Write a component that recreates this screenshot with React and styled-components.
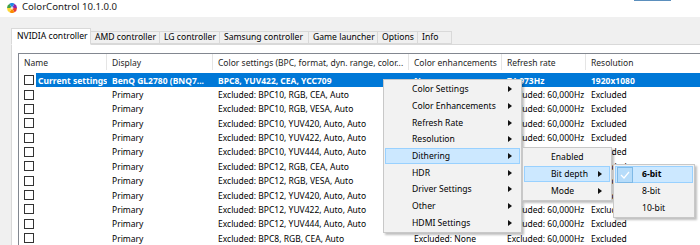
import React from 'react';
import styled, { createGlobalStyle } from 'styled-components';

const FONT = '"Noto Sans", "Open Sans", sans-serif';

const COLUMNS = [
  { title: 'Name', width: 88 },
  { title: 'Display', width: 106 },
  { title: 'Color settings (BPC, format, dyn. range, color...', width: 196 },
  { title: 'Color enhancements', width: 93 },
  { title: 'Refresh rate', width: 84 },
  { title: 'Resolution', width: 140 },
];

const GRID = COLUMNS.map(c => `${c.width}px`).join(' ');

const PRESETS = [
  'BPC10, RGB, CEA, Auto',
  'BPC10, RGB, VESA, Auto',
  'BPC10, YUV420, Auto, Auto',
  'BPC10, YUV422, Auto, Auto',
  'BPC10, YUV444, Auto, Auto',
  'BPC12, RGB, CEA, Auto',
  'BPC12, RGB, VESA, Auto',
  'BPC12, YUV420, Auto, Auto',
  'BPC12, YUV422, Auto, Auto',
  'BPC12, YUV444, Auto, Auto',
  'BPC8, RGB, CEA, Auto',
];

const TABS = [
  { label: 'NVIDIA controller', width: 80 },
  { label: 'AMD controller', width: 69 },
  { label: 'LG controller', width: 60 },
  { label: 'Samsung controller', width: 89 },
  { label: 'Game launcher', width: 69 },
  { label: 'Options', width: 40 },
  { label: 'Info', width: 34 },
];

const MAIN_MENU = [
  'Color Settings',
  'Color Enhancements',
  'Refresh Rate',
  'Resolution',
  'Dithering',
  'HDR',
  'Driver Settings',
  'Other',
  'HDMI Settings',
];

const GlobalStyle = createGlobalStyle`
  html, body {
    margin: 0;
    padding: 0;
    background: #f0f0f0;
    overflow: hidden;
  }
  body {
    font-family: ${FONT};
    font-size: 8.5px;
    color: #000;
  }
`;

const Window = styled.div`
  position: relative;
  width: 700px;
  height: 245px;
  display: flex;
  flex-direction: column;
  background: #f0f0f0;
  overflow: hidden;
`;

const TitleBar = styled.div`
  height: 17px;
  flex: none;
  background: #fff;
  display: flex;
  align-items: flex-start;
  padding-left: 7px;
  box-sizing: border-box;
`;

const TitleText = styled.span`
  margin-left: 5px;
  margin-top: 1px;
  font-size: 9.6px;
  line-height: 12px;
  color: #1a1a1a;
`;

const CaptionEdge = styled.div`
  margin-left: auto;
  margin-right: 29px;
  width: 37px;
  height: 1px;
  background: #5b8fbd;
`;

const Client = styled.div`
  flex: 1;
  display: flex;
  flex-direction: column;
  padding: 11px 0 0 11px;
`;

const TabStrip = styled.div`
  display: flex;
  align-items: flex-end;
  height: 16px;
  position: relative;
  z-index: 1;
`;

const Tab = styled.div`
  width: ${p => p.width}px;
  height: ${p => (p.active ? 17 : 13)}px;
  margin-bottom: ${p => (p.active ? -1 : 0)}px;
  box-sizing: border-box;
  border: 1px solid #d9d9d9;
  border-left-width: ${p => (p.first ? 1 : 0)}px;
  border-bottom-color: ${p => (p.active ? '#fff' : '#d9d9d9')};
  background: ${p => (p.active ? '#fff' : '#f0f0f0')};
  padding-left: ${p => (p.active ? 5 : 4)}px;
  display: flex;
  align-items: center;
  white-space: nowrap;
  font-size: 8.6px;
  line-height: 11px;
`;

const TabPage = styled.div`
  flex: 1;
  background: #fff;
  border-top: 1px solid #d9d9d9;
  border-left: 1px solid #d9d9d9;
  padding: 8px 0 0 6px;
`;

const ListView = styled.div`
  border-top: 1px solid #828790;
  border-left: 1px solid #828790;
  background: #fff;
  height: 100%;
`;

const Header = styled.div`
  display: grid;
  grid-template-columns: ${GRID};
  height: 16px;
`;

const HeaderCell = styled.div`
  border-right: 1px solid #e5e5e5;
  padding-left: 5px;
  display: flex;
  align-items: center;
  white-space: nowrap;
  overflow: hidden;
  color: #1e1e1e;
`;

const Rows = styled.div`
  padding-top: 3px;
`;

const Row = styled.div`
  display: grid;
  grid-template-columns: ${GRID};
  height: 14.36px;
  align-items: center;
  font-weight: ${p => (p.selected ? 700 : 400)};
  color: ${p => (p.selected ? '#fff' : '#000')};
`;

const NameCell = styled.div`
  display: flex;
  align-items: center;
  height: 100%;
  padding-left: 5px;
`;

const CheckBox = styled.span`
  width: 10px;
  height: 10px;
  flex: none;
  box-sizing: border-box;
  border: 1px solid #333;
  background: #fff;
`;

const NameText = styled.span`
  flex: 1;
  height: 100%;
  margin-left: 2px;
  padding-left: 2px;
  display: flex;
  align-items: center;
  white-space: nowrap;
  overflow: hidden;
  background: ${p => (p.selected ? '#0078d7' : 'transparent')};
`;

const Cell = styled.div`
  height: 100%;
  padding-left: 5px;
  display: flex;
  align-items: center;
  white-space: nowrap;
  overflow: hidden;
  background: ${p => (p.selected ? '#0078d7' : 'transparent')};
`;

const Menu = styled.div`
  position: absolute;
  left: ${p => p.x}px;
  top: ${p => p.y}px;
  width: ${p => p.w}px;
  box-sizing: border-box;
  padding: 1px 1px;
  background: #f2f2f2;
  border: 1px solid #c8c8c8;
  box-shadow: 2px 2px 2px rgba(0, 0, 0, 0.25);
  z-index: 5;
`;

const Item = styled.div`
  height: 16.67px;
  box-sizing: border-box;
  display: flex;
  align-items: center;
  padding-left: ${p => p.indent}px;
  padding-right: 7px;
  border: 1px solid ${p => (p.active ? '#99d1ff' : 'transparent')};
  background: ${p => (p.active ? '#cce8ff' : 'transparent')};
  font-weight: ${p => (p.bold ? 700 : 400)};
  white-space: nowrap;
  font-size: 8.6px;
`;

const ItemLabel = styled.span`
  flex: 1;
`;

const CheckMark = styled.span`
  position: absolute;
  left: 2px;
  top: 1px;
  width: 16px;
  height: 16px;
  box-sizing: border-box;
  border: 1px solid #7fb9e6;
  background: #b6dcfa;
  display: flex;
  align-items: center;
  justify-content: center;
`;

const Arrow = () => (
  <svg width="4" height="6" viewBox="0 0 4 6">
    <polygon points="0,0 4,3 0,6" fill="#111" />
  </svg>
);

const AppIcon = () => (
  <svg width="10" height="10" viewBox="0 0 20 20" style={{ marginTop: 3 }}>
    {['#e53935', '#fb8c00', '#fdd835', '#43a047', '#1e88e5', '#8e24aa'].map((c, i) => {
      const a0 = (i * 60 * Math.PI) / 180;
      const a1 = ((i + 1) * 60 * Math.PI) / 180;
      const p = (a, r) => `${10 + r * Math.cos(a)},${10 + r * Math.sin(a)}`;
      return <path key={c} d={`M10,10 L${p(a0, 10)} A10,10 0 0 1 ${p(a1, 10)} Z`} fill={c} />;
    })}
    <circle cx="10" cy="10" r="3" fill="#fff" opacity="0.7" />
  </svg>
);

const MenuItem = ({ label, active, bold, indent = 26, arrow = true }) => (
  <Item active={active} bold={bold} indent={indent}>
    <ItemLabel>{label}</ItemLabel>
    {arrow && <Arrow />}
  </Item>
);

export default function App() {
  return (
    <Window>
      <GlobalStyle />
      <TitleBar>
        <AppIcon />
        <TitleText>ColorControl 10.1.0.0</TitleText>
        <CaptionEdge />
      </TitleBar>
      <Client>
        <TabStrip>
          {TABS.map((t, i) => (
            <Tab key={t.label} width={t.width} active={i === 0} first={i === 0}>
              {t.label}
            </Tab>
          ))}
        </TabStrip>
        <TabPage>
          <ListView>
            <Header>
              {COLUMNS.map(c => (
                <HeaderCell key={c.title}>{c.title}</HeaderCell>
              ))}
            </Header>
            <Rows>
              <Row selected>
                <NameCell>
                  <CheckBox />
                  <NameText selected>Current settings</NameText>
                </NameCell>
                <Cell selected>BenQ GL2780 (BNQ7...</Cell>
                <Cell selected>BPC8, YUV422, CEA, YCC709</Cell>
                <Cell selected>None</Cell>
                <Cell selected>74,973Hz</Cell>
                <Cell selected>1920x1080</Cell>
              </Row>
              {PRESETS.map(p => (
                <Row key={p}>
                  <NameCell>
                    <CheckBox />
                  </NameCell>
                  <Cell>Primary</Cell>
                  <Cell>Excluded: {p}</Cell>
                  <Cell>Excluded: None</Cell>
                  <Cell>Excluded: 60,000Hz</Cell>
                  <Cell>Excluded</Cell>
                </Row>
              ))}
            </Rows>
          </ListView>
        </TabPage>
      </Client>

      <Menu x={383} y={79} w={139}>
        {MAIN_MENU.map(label => (
          <MenuItem key={label} label={label} active={label === 'Dithering'} />
        ))}
      </Menu>

      <Menu x={522} y={147} w={90}>
        <MenuItem label="Enabled" arrow={false} />
        <MenuItem label="Bit depth" active />
        <MenuItem label="Mode" />
      </Menu>

      <Menu x={613} y={164} w={82}>
        <div style={{ position: 'relative' }}>
          <CheckMark>
            <svg width="10" height="8" viewBox="0 0 10 8">
              <polyline points="1,4 4,7 9,1" fill="none" stroke="#fff" strokeWidth="1.2" />
            </svg>
          </CheckMark>
          <MenuItem label="6-bit" active bold indent={26} arrow={false} />
          <MenuItem label="8-bit" indent={26} arrow={false} />
          <MenuItem label="10-bit" indent={26} arrow={false} />
        </div>
      </Menu>
    </Window>
  );
}
